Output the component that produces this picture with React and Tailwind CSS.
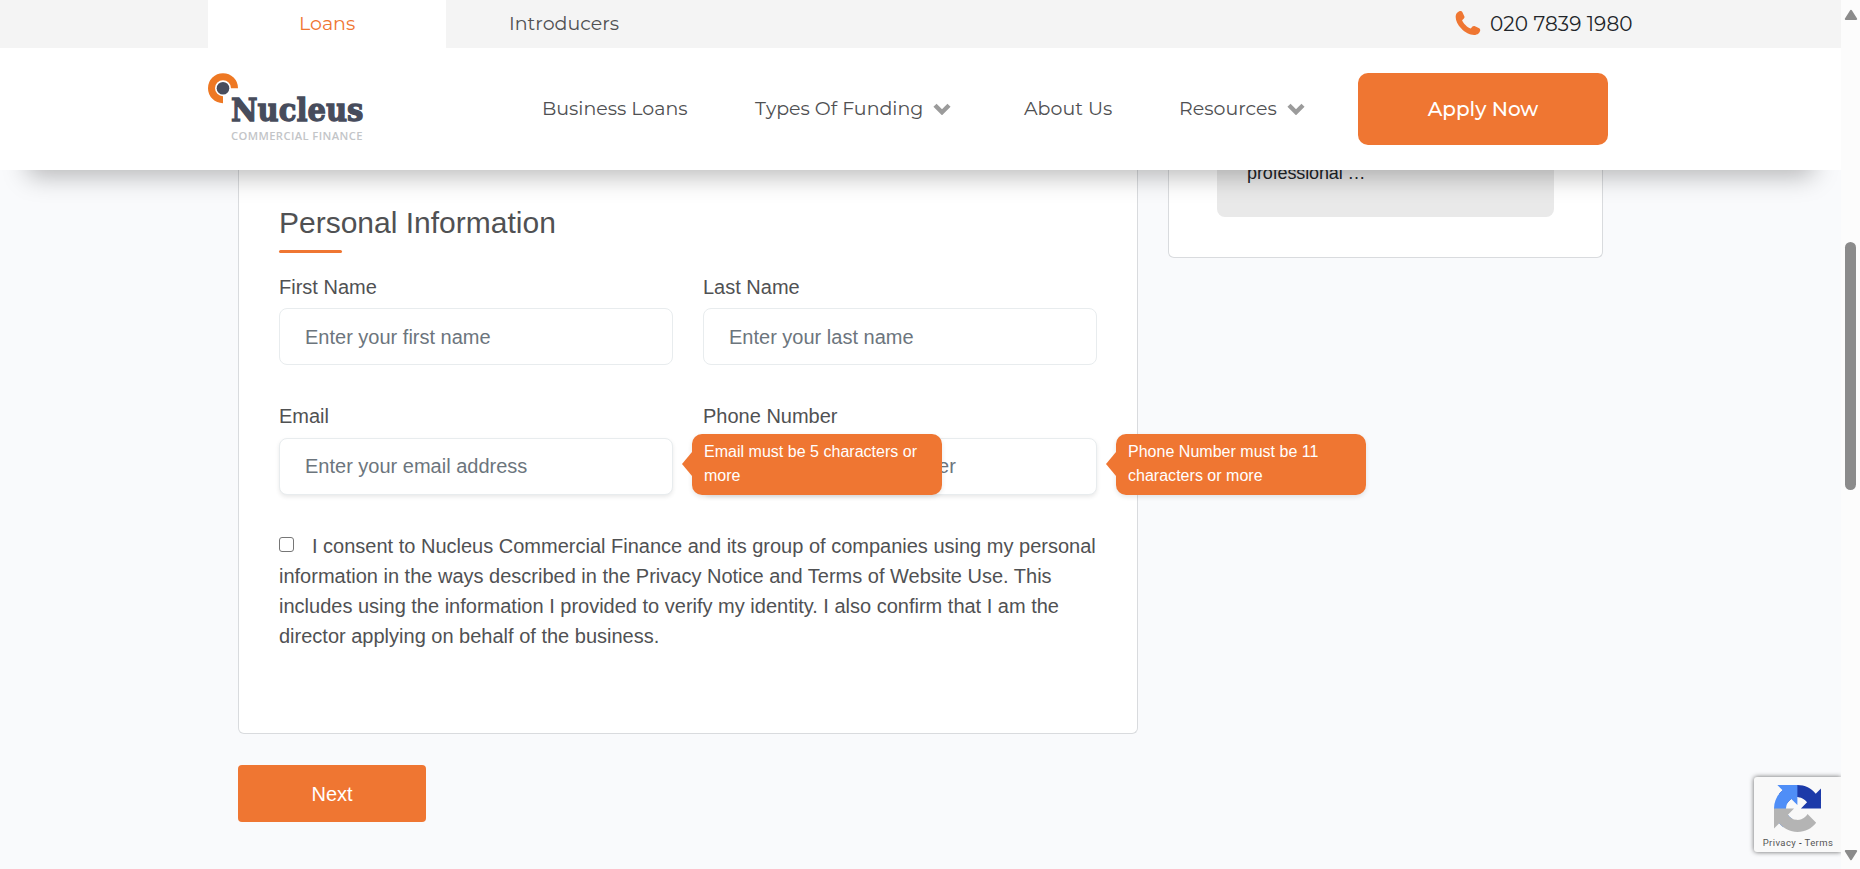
import React from "react";

const brandFont = "font-['Montserrat','Inter',sans-serif]";

function Chevron() {
  return (
    <svg className="h-[12px] w-[18px] shrink-0" viewBox="0 0 18 12">
      <path d="M2 2.2 L9 9.2 L16 2.2" fill="none" stroke="#9b9b9b" strokeWidth="4.4" />
    </svg>
  );
}

function Logo() {
  return (
    <svg className="h-[70px] w-[170px]" viewBox="0 0 170 70">
      <path d="M30 15.2 A15 15 0 1 0 15 30.2 V23.2 A8 8 0 1 1 23 15.2 Z" fill="#ee7823" />
      <circle cx="15" cy="15.2" r="6.3" fill="#474c5c" />
      <text x="23" y="47.6" fontFamily="'DejaVu Serif','Liberation Serif',serif" fontWeight="700" fontSize="32.5" fill="#474c5c" stroke="#474c5c" strokeWidth="1.3" textLength="132.5" lengthAdjust="spacingAndGlyphs">Nucleus</text>
      <text x="23" y="66.8" fontFamily="'Open Sans','Noto Sans',sans-serif" fontWeight="600" fontSize="11.2" fill="#c3c5c8" textLength="131.5" lengthAdjust="spacing">COMMERCIAL FINANCE</text>
    </svg>
  );
}

function Field({ label, placeholder, low, shadow, error }) {
  return (
    <div className="relative flex w-[394px] flex-col">
      <label className={"h-[37px] text-[20px] leading-[30px] " + (low ? "pt-px" : "")}>{label}</label>
      <input
        type="text"
        placeholder={placeholder}
        className={
          "h-[57px] w-full rounded-lg border border-[#e8ecee] bg-white px-[25px] text-[20px] placeholder:text-[#6c757d] " +
          (shadow ? "shadow-[0_2px_4px_rgba(0,0,0,0.09)]" : "pt-[2px]")
        }
      />
      {error && (
        <div className="absolute left-[413px] top-[33px] z-10 h-[61px] w-[250px] rounded-[10px] bg-[#ef7632] pl-[12px] pt-[6px] text-[16px] leading-[24px] text-white shadow-[0_2px_5px_rgba(0,0,0,0.1)]">
          <svg className="absolute left-[-10px] top-[18px] h-[24px] w-[11px]" viewBox="0 0 11 24">
            <path d="M0 12 L10 0 H11 V24 H10 Z" fill="#ef7632" />
          </svg>
          {error.map((line) => (
            <div key={line} className="whitespace-nowrap tracking-[0.02px]">{line}</div>
          ))}
        </div>
      )}
    </div>
  );
}

function Header() {
  return (
    <header className={"relative z-20 h-[170px] w-full shrink-0 bg-white text-[#4f5052] shadow-[0_34px_24px_-28px_rgba(0,0,0,0.28)] " + brandFont}>
      <div className="flex h-[48px] bg-[#f4f4f4] pl-[208px] text-[19px] leading-[47px]">
        <div className="w-[238px] bg-white pl-[91px] text-[#ef7632]">Loans</div>
        <div className="w-[1009px] pl-[63px]">Introducers</div>
        <svg className="mt-[10px] h-[26px] w-[26px]" viewBox="0 0 26 26">
          <path d="M2.2 2.7 C4 .9 6.5.4 7.3 2 L9.3 6.2 C10 7.6 9.1 8.5 7.1 10.2 C8.4 13.4 12 17.2 15.8 18.5 C17.4 16.3 18.5 15.6 20 16.3 L24.2 18.2 C26 19.2 25.2 21.8 23.5 23.6 C19.5 27 11.5 24.2 6.3 18.6 C.8 12.7-.9 5.8 2.2 2.7Z" fill="#ef7632" />
        </svg>
        <div className="whitespace-nowrap pl-[9px] text-[20px] leading-[48px] tracking-[0.1px] text-[#212529]">020 7839 1980</div>
      </div>
      <div className="flex h-[122px] items-start pl-[208px] text-[19px] leading-[72px]">
        <div className="mt-[25px] w-[334px]"><Logo /></div>
        <nav className="mt-[25px] flex whitespace-nowrap">
          <div className="w-[213px]">Business Loans</div>
          <div className="flex w-[269px] items-center">
            <span className="w-[178px]">Types Of Funding</span>
            <Chevron />
          </div>
          <div className="w-[155px]">About Us</div>
          <div className="flex w-[179px] items-center">
            <span className="w-[108px]">Resources</span>
            <Chevron />
          </div>
        </nav>
        <button className="mt-[25px] h-[72px] w-[250px] rounded-[10px] bg-[#ef7632] text-[20px] font-medium text-white">
          Apply Now
        </button>
      </div>
    </header>
  );
}

function Recaptcha() {
  return (
    <div className="absolute right-0 top-[777px] z-10 flex h-[75px] w-[87px] flex-col items-center rounded-l-[3px] bg-[#f9f9f9] pt-[8px] shadow-[0_0_5px_rgba(0,0,0,0.6)]">
      <svg className="h-[47px] w-[47px]" viewBox="0 0 64 64">
        <path d="M64 31.955l-.033-1.37V4.687l-7.16 7.16C50.948 4.674 42.033.093 32.05.093c-10.4 0-19.622 4.96-25.458 12.64l11.736 11.86a15.55 15.55 0 0 1 4.754-5.334c2.05-1.6 4.952-2.906 8.968-2.906.485 0 .86.057 1.135.163 4.976.393 9.288 3.14 11.828 7.124l-8.307 8.307L64 31.953" fill="#1c3aa9" />
        <path d="M31.862.094l-1.37.033H4.594l7.16 7.16C4.58 13.147 0 22.06 0 32.046c0 10.4 4.96 19.622 12.64 25.458L24.5 45.768a15.55 15.55 0 0 1-5.334-4.754c-1.6-2.05-2.906-4.952-2.906-8.968 0-.485.057-.86.163-1.135.393-4.976 3.14-9.288 7.124-11.828l8.307 8.307L31.86.095" fill="#4f8ef7" />
        <path d="M.001 32.045l.033 1.37v25.898l7.16-7.16c5.86 7.173 14.774 11.754 24.76 11.754 10.4 0 19.622-4.96 25.458-12.64l-11.736-11.86a15.55 15.55 0 0 1-4.754 5.334c-2.05 1.6-4.952 2.906-8.968 2.906-.485 0-.86-.057-1.135-.163-4.976-.393-9.288-3.14-11.828-7.124l8.307-8.307c-10.522.04-22.4.066-27.295-.005" fill="#b4b4b4" />
      </svg>
      <div className="mt-[5px] whitespace-nowrap pl-px font-['Roboto',sans-serif] text-[9.5px] leading-[12px] tracking-[0.4px] text-[#555]">
        Privacy <span className="text-black">-</span> Terms
      </div>
    </div>
  );
}

function Scrollbar() {
  return (
    <div className="flex h-[869px] w-[19px] shrink-0 flex-col items-center bg-[#fcfcfc]">
      <svg className="mt-[9px] h-[12px] w-[14px]" viewBox="0 0 14 12">
        <path d="M7 1.8 L12.2 10 H1.8 Z" fill="#8b8b8b" stroke="#8b8b8b" strokeWidth="2" strokeLinejoin="round" />
      </svg>
      <div className="mt-[221px] h-[248px] w-[11px] rounded-full bg-[#8b8b8b]" />
      <svg className="mt-[359px] h-[12px] w-[14px]" viewBox="0 0 14 12">
        <path d="M7 10.2 L12.2 2 H1.8 Z" fill="#8b8b8b" stroke="#8b8b8b" strokeWidth="2" strokeLinejoin="round" />
      </svg>
    </div>
  );
}

export default function App() {
  return (
    <div className="flex h-[869px] w-[1860px] overflow-hidden font-['Liberation_Sans',Arial,sans-serif] text-[#505153]">
      <div className="relative flex h-[869px] w-[1841px] flex-col overflow-hidden bg-[#f9fafc]">
        <Header />
        <main className="flex items-start gap-[30px] pl-[238px]">
          <div className="w-[900px]">
            <section className="h-[564px] rounded-b-[6px] border border-t-0 border-[#d9dbde] bg-white px-[40px] pt-[33px]">
              <h2 className="h-[47px] text-[30px] leading-[40px]">Personal Information</h2>
              <div className="h-[3px] w-[63px] rounded-full bg-[#ef7632]" />
              <div className="mt-[18px] grid grid-cols-[394px_394px] gap-x-[30px] gap-y-[36px]">
                <Field label="First Name" placeholder="Enter your first name" low />
                <Field label="Last Name" placeholder="Enter your last name" low />
                <Field label="Email" placeholder="Enter your email address" shadow error={["Email must be 5 characters or", "more"]} />
                <Field label="Phone Number" placeholder="Enter your phone number" shadow error={["Phone Number must be 11", "characters or more"]} />
              </div>
              <div className="mt-[36px] whitespace-nowrap text-[20px] leading-[30px]">
                <div className="flex">
                  <span className="mr-[18px] mt-[6px] h-[15px] w-[15px] rounded-[3px] border border-[#767676] bg-white" />
                  <span>I consent to Nucleus Commercial Finance and its group of companies using my personal</span>
                </div>
                <div>information in the ways described in the Privacy Notice and Terms of Website Use. This</div>
                <div>includes using the information I provided to verify my identity. I also confirm that I am the</div>
                <div>director applying on behalf of the business.</div>
              </div>
            </section>
            <button className="mt-[31px] h-[57px] w-[188px] rounded-[4px] bg-[#ef7632] text-[20px] text-white">Next</button>
          </div>
          <aside className="h-[88px] w-[435px] rounded-b-[6px] border border-t-0 border-[#d9dbde] bg-white pl-[48px]">
            <div className="h-[47px] w-[337px] rounded-b-[8px] bg-[#e9e9e9] pl-[30px]">
              <div className="relative top-[-12px] text-[18px] leading-[30px] tracking-[-0.12px] text-[#212529]">professional …</div>
            </div>
          </aside>
        </main>
        <Recaptcha />
      </div>
      <Scrollbar />
    </div>
  );
}
